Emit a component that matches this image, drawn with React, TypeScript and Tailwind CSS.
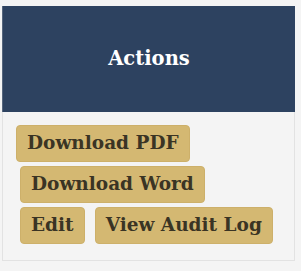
import React from "react";

const btn =
  "inline-flex items-center h-[37px] px-[10px] rounded-[4px] bg-[#d4b872] border border-[#cdb06a] text-[#3a3424] text-[18.5px] font-bold leading-none whitespace-nowrap";

export default function App() {
  return (
    <div
      className="w-[301px] h-[271px] bg-[#f4f4f4] pt-[6px] pl-[2px]"
      style={{ fontFamily: '"DejaVu Serif", "Liberation Serif", serif' }}
    >
      <div className="w-[293px]">
        <div className="h-[106px] bg-[#2d4260] border-l border-[#56667d] flex items-center justify-center">
          <span className="text-white text-[19.5px] font-bold">Actions</span>
        </div>
        <div className="h-[149px] border-r border-b border-l border-[#e2e2e2] pt-[13px] pl-[13px] flex flex-col items-start gap-[4px]">
          <div className="flex">
            <span className={btn}>Download PDF</span>
          </div>
          <div className="flex pl-[4px]">
            <span className={btn}>Download Word</span>
          </div>
          <div className="flex pl-[4px] gap-[10px]">
            <span className={btn}>Edit</span>
            <span className={btn}>View Audit Log</span>
          </div>
        </div>
      </div>
    </div>
  );
}
